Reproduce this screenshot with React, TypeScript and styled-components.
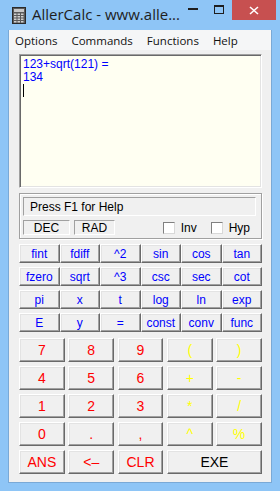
import styled, { createGlobalStyle } from 'styled-components'

const GlobalStyle = createGlobalStyle`
  html, body {
    margin: 0;
    padding: 0;
    background: #8ec5f6;
  }
  * {
    box-sizing: border-box;
  }
`

const Window = styled.div`
  width: 280px;
  height: 491px;
  background: #8ec5f6;
  display: flex;
  flex-direction: column;
  font-family: "Liberation Sans", Arial, sans-serif;
`

const TitleBar = styled.div`
  height: 30px;
  display: flex;
  align-items: flex-start;
  padding: 0 8px 0 12px;
`

const AppIcon = styled.svg`
  margin-top: 7px;
  flex: none;
`

const Title = styled.div`
  margin-left: 6px;
  margin-top: 4px;
  font-family: "Open Sans", "Noto Sans", sans-serif;
  font-size: 15px;
  color: #1e1e1e;
  white-space: nowrap;
`

const Controls = styled.div`
  margin-left: auto;
  display: flex;
`

const CtlButton = styled.div<{ $w: number; $red?: boolean }>`
  width: ${p => p.$w}px;
  height: 20px;
  display: flex;
  align-items: center;
  justify-content: center;
  background: ${p => (p.$red ? '#c75050' : 'transparent')};
`

const Frame = styled.div`
  flex: 1;
  display: flex;
  flex-direction: column;
  margin: 0 8px 8px 8px;
  border-left: 1px solid #7aa9d6;
  border-right: 1px solid #7aa9d6;
  border-bottom: 1px solid #7aa9d6;
`

const MenuBar = styled.div`
  height: 20px;
  background: #f5f6f7;
  display: flex;
  align-items: center;
  gap: 14px;
  padding-left: 6px;
  font-family: "Open Sans", "Noto Sans", sans-serif;
  font-size: 11.5px;
  color: #111;
`

const Client = styled.div`
  flex: 1;
  background: #f0f0f0;
  padding: 4px 9px 0 10px;
  display: flex;
  flex-direction: column;
`

const Display = styled.div`
  height: 134px;
  background: #fffff2;
  border-top: 1px solid #a0a0a0;
  border-left: 1px solid #a0a0a0;
  border-right: 1px solid #ffffff;
  border-bottom: 1px solid #ffffff;
  box-shadow: inset 1px 1px 0 #696969, inset -1px -1px 0 #e3e3e3;
  padding: 3px 3px;
  color: #0000ff;
  font-size: 12px;
  line-height: 13px;
`

const Caret = styled.div`
  width: 1px;
  height: 13px;
  background: #000;
`

const Panel = styled.div`
  margin-top: 5px;
  height: 46px;
  border: 1px solid #a0a0a0;
  box-shadow: inset 1px 1px 0 #fff, 1px 1px 0 #fff;
  padding: 3px 5px 0 3px;
  display: flex;
  flex-direction: column;
  gap: 4px;
`

const Sunken = styled.div<{ $w?: number }>`
  width: ${p => (p.$w ? `${p.$w}px` : 'auto')};
  border-top: 1px solid #a0a0a0;
  border-left: 1px solid #a0a0a0;
  border-right: 1px solid #fff;
  border-bottom: 1px solid #fff;
  font-size: 12px;
  color: #000;
  display: flex;
  align-items: center;
`

const HelpField = styled(Sunken)`
  height: 19px;
  padding-left: 6px;
`

const ModeBox = styled(Sunken)`
  height: 15px;
  justify-content: center;
`

const StatusRow = styled.div`
  display: flex;
  align-items: center;
  gap: 4px;
`

const CheckLabel = styled.label<{ $first?: boolean }>`
  display: flex;
  align-items: center;
  gap: 6px;
  font-size: 12px;
  margin-left: ${p => (p.$first ? 'auto' : '10px')};
  margin-right: ${p => (p.$first ? '0' : '6px')};
`

const CheckBox = styled.span`
  width: 12px;
  height: 12px;
  background: #fff;
  border-top: 1px solid #808080;
  border-left: 1px solid #808080;
  border-right: 1px solid #d8d8d8;
  border-bottom: 1px solid #d8d8d8;
`

const FuncGrid = styled.div`
  margin-top: 5px;
  display: grid;
  grid-template-columns: repeat(6, 1fr);
  grid-auto-rows: 19px;
  row-gap: 4px;
`

const KeyGrid = styled.div`
  margin-top: 6px;
  display: grid;
  grid-template-columns: repeat(5, 1fr);
  grid-auto-rows: 24px;
  row-gap: 4px;
  column-gap: 3.5px;
`

const Key = styled.div<{ $color: string; $span?: number; $size: number }>`
  grid-column: span ${p => p.$span ?? 1};
  background: #f0f0f0;
  border-top: 1px solid #ffffff;
  border-left: 1px solid #ffffff;
  border-right: 1px solid #696969;
  border-bottom: 1px solid #696969;
  box-shadow: inset -1px -1px 0 #a0a0a0, inset 1px 1px 0 #e3e3e3;
  color: ${p => p.$color};
  font-size: ${p => p.$size}px;
  display: flex;
  align-items: center;
  justify-content: center;
`

const funcKeys = [
  'fint', 'fdiff', '^2', 'sin', 'cos', 'tan',
  'fzero', 'sqrt', '^3', 'csc', 'sec', 'cot',
  'pi', 'x', 't', 'log', 'ln', 'exp',
  'E', 'y', '=', 'const', 'conv', 'func',
]

const RED = '#ff0000'
const YEL = '#ffff00'

const numKeys: { label: string; color: string; span?: number }[] = [
  { label: '7', color: RED }, { label: '8', color: RED }, { label: '9', color: RED },
  { label: '(', color: YEL }, { label: ')', color: YEL },
  { label: '4', color: RED }, { label: '5', color: RED }, { label: '6', color: RED },
  { label: '+', color: YEL }, { label: '-', color: YEL },
  { label: '1', color: RED }, { label: '2', color: RED }, { label: '3', color: RED },
  { label: '*', color: YEL }, { label: '/', color: YEL },
  { label: '0', color: RED }, { label: '.', color: RED }, { label: ',', color: RED },
  { label: '^', color: YEL }, { label: '%', color: YEL },
  { label: 'ANS', color: RED }, { label: '<-', color: RED }, { label: 'CLR', color: RED },
  { label: 'EXE', color: '#000000', span: 2 },
]

function CalcIcon() {
  return (
    <AppIcon width="14" height="17" viewBox="0 0 14 17">
      <rect x="0.5" y="0.5" width="13" height="16" fill="#5a5a5a" stroke="#2a2a2a" />
      <rect x="2" y="2" width="10" height="3" fill="#c8c8c8" />
      {[0, 1, 2, 3].map(r =>
        [0, 1, 2].map(c => (
          <rect key={`${r}-${c}`} x={2 + c * 3.5} y={6.5 + r * 2.5} width="2.5" height="1.5" fill="#d0d0d0" />
        ))
      )}
    </AppIcon>
  )
}

export default function App() {
  return (
    <>
      <GlobalStyle />
      <Window>
        <TitleBar>
          <CalcIcon />
          <Title>AllerCalc - www.alle...</Title>
          <Controls>
            <CtlButton $w={26}>
              <svg width="10" height="10" viewBox="0 0 10 10">
                <rect x="0" y="3" width="10" height="2" fill="#1e1e1e" />
              </svg>
            </CtlButton>
            <CtlButton $w={26}>
              <svg width="10" height="10" viewBox="0 0 10 10">
                <rect x="0.5" y="0.5" width="9" height="8" fill="none" stroke="#1e1e1e" />
                <rect x="0" y="0" width="10" height="2" fill="#1e1e1e" />
              </svg>
            </CtlButton>
            <CtlButton $w={44} $red>
              <svg width="10" height="9" viewBox="0 0 10 9">
                <path d="M1 1 L9 8 M9 1 L1 8" stroke="#fff" strokeWidth="1.6" />
              </svg>
            </CtlButton>
          </Controls>
        </TitleBar>
        <Frame>
          <MenuBar>
            <span>Options</span>
            <span>Commands</span>
            <span>Functions</span>
            <span>Help</span>
          </MenuBar>
          <Client>
            <Display>
              <div>123+sqrt(121) =</div>
              <div>134</div>
              <Caret />
            </Display>
            <Panel>
              <HelpField>Press F1 for Help</HelpField>
              <StatusRow>
                <ModeBox $w={47}>DEC</ModeBox>
                <ModeBox $w={41}>RAD</ModeBox>
                <CheckLabel $first>
                  <CheckBox />
                  Inv
                </CheckLabel>
                <CheckLabel>
                  <CheckBox />
                  Hyp
                </CheckLabel>
              </StatusRow>
            </Panel>
            <FuncGrid>
              {funcKeys.map(k => (
                <Key key={k} $color="#0000ff" $size={12}>{k}</Key>
              ))}
            </FuncGrid>
            <KeyGrid>
              {numKeys.map(k => (
                <Key key={k.label} $color={k.color} $span={k.span} $size={14}>
                  {k.label === '<-' ? '<\u2013' : k.label}
                </Key>
              ))}
            </KeyGrid>
          </Client>
        </Frame>
      </Window>
    </>
  )
}
